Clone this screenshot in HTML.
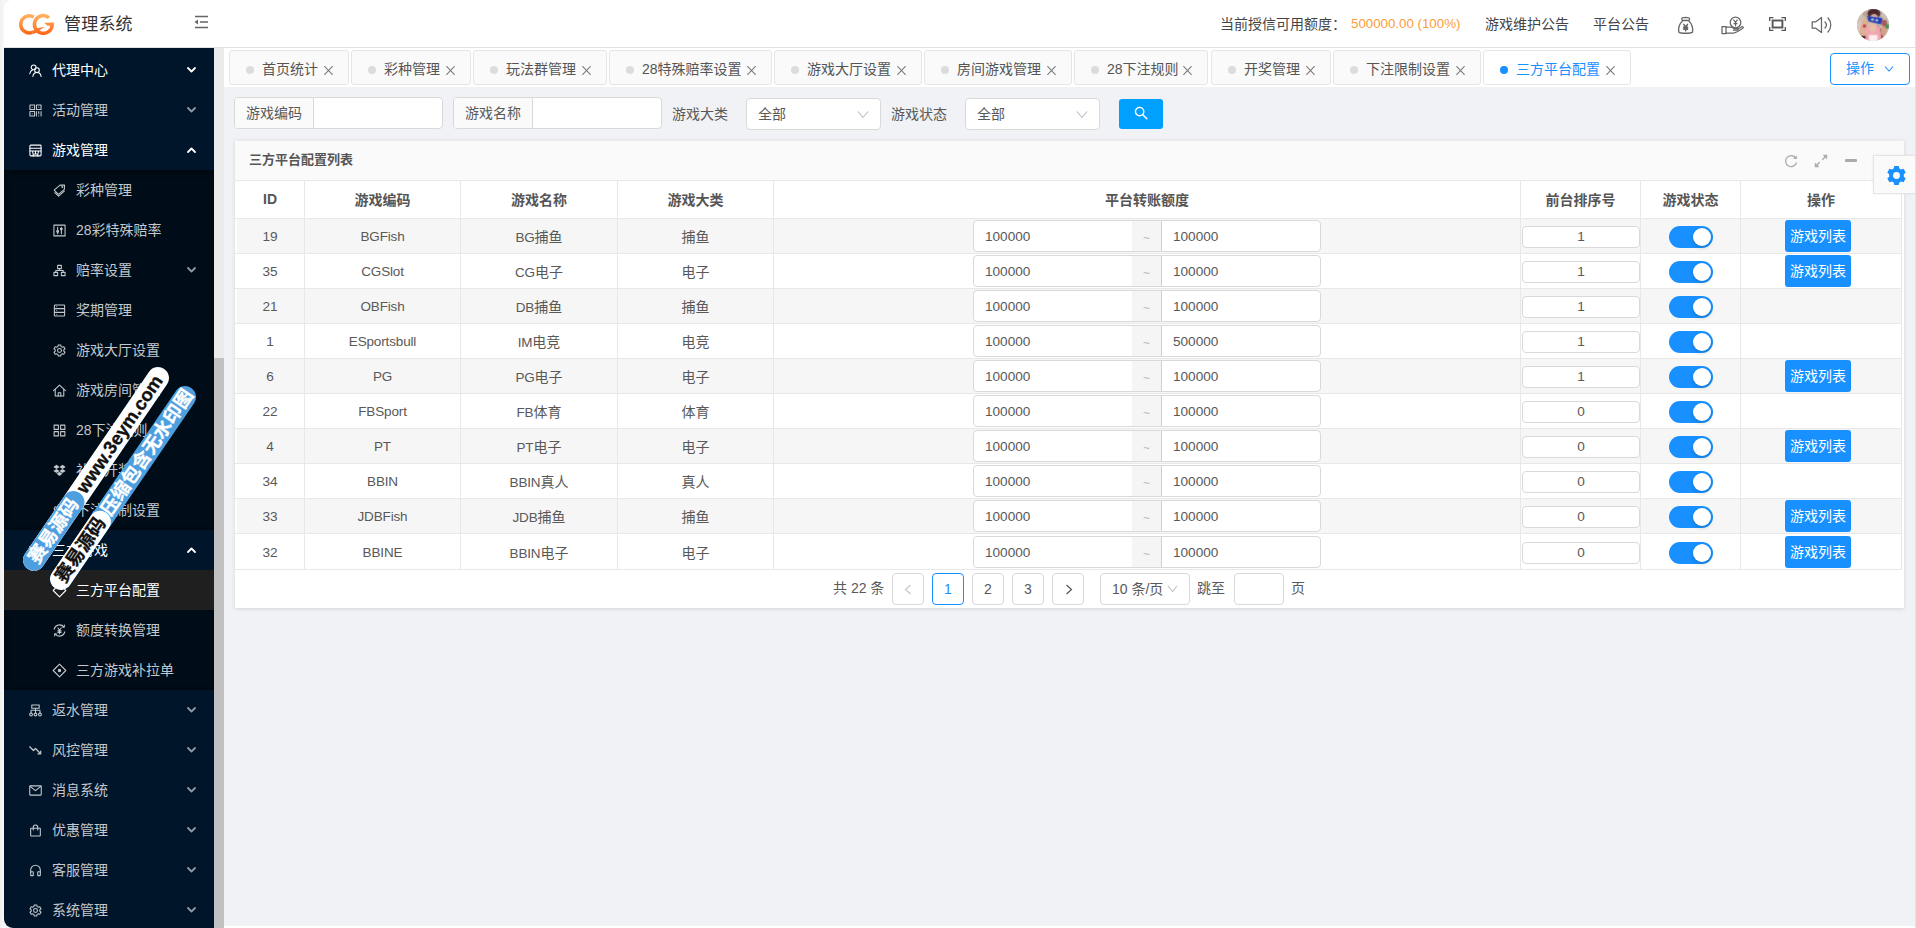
<!DOCTYPE html><html lang="zh-CN"><head><meta charset="utf-8"><title>管理系统</title><style>
*{box-sizing:border-box;margin:0;padding:0}
html,body{width:1916px;height:928px;overflow:hidden}
body{position:relative;background:#f4f4f4;font-family:"Liberation Sans","Noto Sans CJK SC",sans-serif;font-size:14px;color:#595959;}
.abs{position:absolute}
#edgeL{left:0;top:0;width:4px;height:928px;background:linear-gradient(90deg,#f0f0f0,#f8f8f8)}
#hdr{left:4px;top:0;width:1912px;height:48px;background:#fff;border-bottom:1px solid #e2e2e2;border-top-left-radius:8px}
#title{left:64px;top:10.500px;font-size:17px;line-height:28px;color:#333;letter-spacing:.2px;white-space:nowrap}
.hd{top:14px;line-height:20px;font-size:14px;color:#444;white-space:nowrap}
#side{left:4px;top:48px;width:210px;height:880px;background:#001529;border-bottom-left-radius:9px;overflow:hidden}
.sub{position:absolute;left:0;width:210px;background:#000c17;box-shadow:inset 0 2px 6px rgba(0,0,0,.45)}
.mi{position:absolute;left:0;width:210px;height:40px;line-height:40px;color:#c3c8ce;font-size:14px;white-space:nowrap}
.mi .t{position:absolute;left:48px;top:0}
.mi.s .t{left:72px}
.mi svg.ic{position:absolute;left:24.500px;top:13.500px;width:13px;height:13px;overflow:visible}
.mi.s svg.ic{left:48.500px}
.mi svg.ar{position:absolute;left:182.500px;top:16px;width:9px;height:8px;overflow:visible}
.mi.w{color:#fff;font-weight:400}
#sbar{left:214px;top:48px;width:10px;height:880px;background:#ebebeb}
#sthumb{left:214px;top:358px;width:10px;height:570px;background:#c1c1c1}
#main{left:224px;top:48px;width:1692px;height:880px;background:#f0f2f5}
#tabs{left:224px;top:48px;width:1691px;height:39px;background:#fff}
.tab{position:absolute;top:50px;height:35px;border:1px solid #e6e6e6;border-radius:3px;background:#fafafa;font-size:14px;line-height:35px;color:#555;white-space:nowrap}
.tab i{position:absolute;left:16px;top:15px;width:8px;height:8px;border-radius:50%;background:#dcdcdc}
.tab b{position:absolute;left:32px;top:0;font-weight:normal;line-height:37px}
.tab svg{position:absolute;right:15px;top:15px;width:9px;height:9px}
.tab.on{background:#fff;color:#1890ff}
.tab.on i{background:#1890ff}
.grp{position:absolute;top:97px;height:32px;border:1px solid #d9d9d9;border-radius:4px;background:#fff;overflow:hidden}
.grp span{position:absolute;left:0;top:0;width:79px;height:30px;line-height:30px;background:#fafafa;border-right:1px solid #d9d9d9;text-align:center;font-size:14px;color:#595959}
.lbl{position:absolute;top:98px;line-height:32px;font-size:14px;color:#595959;white-space:nowrap}
.sel{position:absolute;top:98px;height:32px;border:1px solid #d9d9d9;border-radius:4px;background:#fff;line-height:30px;font-size:14px;color:#595959;padding-left:11px}
.sel svg{position:absolute;right:11px;top:11px;width:12px;height:9px}
#sbtn{left:1119px;top:99px;width:44px;height:30px;background:#00a0ff;border-radius:3px}
#card{left:235px;top:140px;width:1669px;height:468px;background:#fff;box-shadow:0 1px 4px rgba(0,0,0,.12)}
#chead{left:235px;top:140px;width:1669px;height:41px;background:#fafafa;border-bottom:1px solid #e8e8e8;border-top:1px solid #ececec}
#ctitle{left:249px;top:150px;line-height:20px;font-size:13px;font-weight:bold;color:#555;white-space:nowrap}
table{position:absolute;left:235px;top:180px;border-collapse:collapse;table-layout:fixed;width:1666px;font-size:14px;color:#595959}
th,td{border:1px solid #e8e8e8;text-align:center;padding:0;white-space:nowrap;position:relative}
th{height:38px;padding-bottom:2px;font-weight:bold;color:#555;font-size:14px;background:#fff}
td{height:35px}
tr.o td{background:#f6f6f6}
td:first-child,th:first-child{border-left-color:#fff;box-shadow:inset 1px 0 #fff}
tr.z td{height:36px}
tr.z .ig{top:2px}
tr.z .si,tr.z .sw{top:8px}
tr.z .gb{top:2px}
.ig{position:absolute;left:199px;top:1px;width:348px;height:32px;border:1px solid #d9d9d9;border-radius:4px;background:#fff;overflow:hidden;text-align:left}
.ig u{position:absolute;top:0;line-height:32px;text-decoration:none;font-size:13.600px;color:#595959}
.ig em{position:absolute;left:158px;top:0;width:30px;height:30px;background:#f5f5f5;border-right:1px solid #d0d0d0;text-align:center;line-height:35px;font-style:normal;color:#bbb;font-size:12px}
.si{position:absolute;left:1px;top:7px;width:118px;height:22px;border:1px solid #d9d9d9;border-radius:4px;background:#fff;line-height:20px;font-size:13.600px;text-align:center}
.sw{position:absolute;left:28px;top:7px;width:44px;height:22px;border-radius:11px;background:#1890ff}
.sw:after{content:"";position:absolute;right:2px;top:2px;width:18px;height:18px;border-radius:50%;background:#fff;box-shadow:0 2px 4px rgba(0,35,11,.2)}
.gb{position:absolute;left:44px;top:1px;width:66px;height:32px;border-radius:3px;background:#1890ff;color:#fff;font-size:14px;line-height:32px;text-align:center}
.pg{position:absolute;top:573px;height:32px;line-height:30px;font-size:14px;color:#595959;white-space:nowrap}
.pb{border:1px solid #d9d9d9;border-radius:4px;background:#fff;width:32px;text-align:center}
#gear{left:1873px;top:155px;width:43px;height:39px;background:#fafafa;border:1px solid #e4e4e4;border-right:0;box-shadow:0 0 3px rgba(0,0,0,.06)}
.wm{position:absolute;width:242px;height:22px;border-radius:11px;white-space:nowrap;font-weight:bold;font-size:18.500px;line-height:22px;overflow:hidden;transform:rotate(-55.700deg)}
.wm span{position:absolute;top:0;height:22px;border-radius:11px;-webkit-text-stroke:.3px currentColor}
.l{font-size:13.500px;letter-spacing:-.15px}
.n{font-size:13.600px}
.bot{left:224px;top:926px;width:1692px;height:2px;background:#fff}
#edgeR{left:1914.500px;top:0;width:1.500px;height:928px;background:#e2e2e2}
</style></head><body>
<div class="abs" id="edgeL"></div>
<div class="abs" id="hdr"></div>
<svg class="abs" style="left:0;top:0;width:60px;height:48px" viewBox="0 0 60 48"><defs><linearGradient id="lg" gradientUnits="userSpaceOnUse" x1="0" y1="13" x2="0" y2="35.500"><stop offset="0" stop-color="#ffb866"/><stop offset=".55" stop-color="#ff8a3a"/><stop offset="1" stop-color="#ff6216"/></linearGradient></defs><g fill="none" stroke="url(#lg)" stroke-width="3.500"><path d="M33.700 17A8.550 8.550 0 1 0 32.300 32.400"/><path d="M49 17.600A8.900 8.900 0 1 0 52.200 24.400"/></g><g fill="url(#lg)"><path d="M31.700 30.800C35 30.500 38 27 44.800 27C41 28.500 38 33 32.900 34.100Z"/><path d="M53.950 22.500L44.300 22.800L47.500 25.700L53.800 25.700Z"/></g></svg>
<div class="abs" id="title">管理系统</div>
<svg class="abs" style="left:194px;top:15px;width:15px;height:14px" viewBox="0 0 15 14"><g fill="none" stroke="#666" stroke-width="1.300"><path d="M1 1.500h13M6 7h8M1 12.500h13"/></g><path d="M.5 7l3.500 -2.500v5z" fill="#666"/></svg>
<div class="abs hd" style="left:1220px">当前授信可用额度：</div>
<div class="abs hd" style="left:1351px;color:#fa9d3b;font-size:13.300px">500000.00 (100%)</div>
<div class="abs hd" style="left:1485px">游戏维护公告</div>
<div class="abs hd" style="left:1593px">平台公告</div>
<svg class="abs" style="left:1675.500px;top:14.500px;width:19.300px;height:21.700px" viewBox="0 0 18 18" preserveAspectRatio="none"><g fill="none" stroke="#666" stroke-width="1.250" stroke-linecap="round" stroke-linejoin="round"><path d="M5.500 2.800c0 -1 7 -1 7 0v1.200c0 .8 -7 .8 -7 0z"/><path d="M6.200 4.800c-2.500 2.200 -4.200 6 -3.600 9.200c.3 1.600 12.500 1.600 12.800 0c.6 -3.200 -1.100 -7 -3.600 -9.200"/><path d="M7.300 7.800l1.700 2.200l1.700 -2.200M9 10v3M7.200 10.200h3.600M7.200 11.700h3.600" stroke-width="1.400"/></g></svg>
<svg class="abs" style="left:1721px;top:15.500px;width:24px;height:20px" viewBox="0 0 24 20"><g fill="none" stroke="#666" stroke-width="1.250" stroke-linecap="round" stroke-linejoin="round"><circle cx="14.500" cy="6.500" r="5.300"/><path d="M12.800 4l1.700 2.400l1.700 -2.400M14.500 6.400v3.400M13 7.600h3"/><rect x="1" y="10.500" width="4" height="7"/><path d="M5 11h4.500c1.500 0 2.500 .8 3.500 1.500h3.500c1 0 1 1.700 0 1.700h-4"/><path d="M5 17h7.500c2 0 7 -3.200 9.500 -5c.8 -.7 -.2 -1.800 -1.200 -1.300l-3.600 2"/></g></svg>
<svg class="abs" style="left:1769px;top:17px;width:17px;height:14px" viewBox="0 0 17 14"><g fill="none" stroke="#555" stroke-width="1.300"><path d="M.7 4v-3.300h3.800M12.500 .7h3.800v3.300M16.300 10v3.300h-3.800M4.500 13.300h-3.800v-3.300"/><rect x="3.600" y="3.500" width="9.800" height="7" stroke-width="1.900"/></g></svg>
<svg class="abs" style="left:1811px;top:16px;width:22px;height:18px" viewBox="0 0 22 18"><g fill="none" stroke="#666" stroke-width="1.250" stroke-linecap="round" stroke-linejoin="round" stroke-width="1.350"><path d="M1.200 5.800h3.600l5.700 -4.300v15l-5.700 -4.300h-3.600z"/><path d="M14 6c1.600 1.700 1.600 4.300 0 6"/><path d="M17 2c3.700 4 3.700 10 0 14"/></g></svg>
<svg class="abs" style="left:1857px;top:8.800px;width:32px;height:32px" viewBox="0 0 32 32"><defs><clipPath id="avc"><circle cx="16" cy="16" r="16"/></clipPath><filter id="avb" x="-20%" y="-20%" width="140%" height="140%" color-interpolation-filters="sRGB"><feGaussianBlur stdDeviation="0.82"/></filter></defs><g clip-path="url(#avc)"><rect width="32" height="32" fill="#cbbdb2"/><g id="avg" filter="url(#avb)"><rect x="-4" y="-4" width="40" height="40" fill="#cdc0b5"/><path d="M-2 13h9v12h-9z" fill="#dcc6c0"/><path d="M6 2l5 1l-1 5l-4 -1z" fill="#b9a58f"/><ellipse cx="5.500" cy="28.500" rx="5.500" ry="3.500" fill="#35141d"/><path d="M2 24C4 16 6 10 9 7L12.500 11C10.500 16 9.500 22 8.500 27L2 27Z" fill="#dcb193"/><ellipse cx="17" cy="4.500" rx="6.500" ry="5" fill="#46252a"/><ellipse cx="17" cy="12" rx="5.200" ry="7" fill="#e6bfa3"/><ellipse cx="16.500" cy="16.800" rx="1.800" ry=".7" fill="#c9606a"/><path d="M20 16C24.500 18 27 26 26 32L21 32C22 26 21 22 20 16Z" fill="#8a4040"/><path d="M24.500 11L29.500 12.500C31 19 29 26 27 29L23.500 24C25 20 25 16 24.500 11Z" fill="#d3a083"/><ellipse cx="27.300" cy="14" rx="2.800" ry="3.300" fill="#a85a58"/><path d="M9 18L13 16.500L16 23L20 16.500L23 18.500L25 34L8 34Z" fill="#f0a5b0"/><ellipse cx="16" cy="19.500" rx="2.800" ry="4" fill="#e8c0a8"/><path d="M12 26h8.500v7h-8.500z" fill="#fdf0f0"/><circle cx="7.500" cy="17" r="1.700" fill="#c92f3c"/><circle cx="30.500" cy="17.500" r="2.200" fill="#3c8f4e"/><path d="M10 7L25.500 9L24 15.500L11.500 12.500Z" fill="#1b3ab8"/><ellipse cx="15.500" cy="10.600" rx="1.600" ry="1.100" fill="#e3e6cf"/><ellipse cx="19.800" cy="11.400" rx="1.400" ry="1.100" fill="#e3e6cf"/></g><g opacity=".5"><rect x="-4" y="-4" width="40" height="40" fill="#cdc0b5"/><path d="M-2 13h9v12h-9z" fill="#dcc6c0"/><path d="M6 2l5 1l-1 5l-4 -1z" fill="#b9a58f"/><ellipse cx="5.500" cy="28.500" rx="5.500" ry="3.500" fill="#35141d"/><path d="M2 24C4 16 6 10 9 7L12.500 11C10.500 16 9.500 22 8.500 27L2 27Z" fill="#dcb193"/><ellipse cx="17" cy="4.500" rx="6.500" ry="5" fill="#46252a"/><ellipse cx="17" cy="12" rx="5.200" ry="7" fill="#e6bfa3"/><ellipse cx="16.500" cy="16.800" rx="1.800" ry=".7" fill="#c9606a"/><path d="M20 16C24.500 18 27 26 26 32L21 32C22 26 21 22 20 16Z" fill="#8a4040"/><path d="M24.500 11L29.500 12.500C31 19 29 26 27 29L23.500 24C25 20 25 16 24.500 11Z" fill="#d3a083"/><ellipse cx="27.300" cy="14" rx="2.800" ry="3.300" fill="#a85a58"/><path d="M9 18L13 16.500L16 23L20 16.500L23 18.500L25 34L8 34Z" fill="#f0a5b0"/><ellipse cx="16" cy="19.500" rx="2.800" ry="4" fill="#e8c0a8"/><path d="M12 26h8.500v7h-8.500z" fill="#fdf0f0"/><circle cx="7.500" cy="17" r="1.700" fill="#c92f3c"/><circle cx="30.500" cy="17.500" r="2.200" fill="#3c8f4e"/><path d="M10 7L25.500 9L24 15.500L11.500 12.500Z" fill="#1b3ab8"/><ellipse cx="15.500" cy="10.600" rx="1.600" ry="1.100" fill="#e3e6cf"/><ellipse cx="19.800" cy="11.400" rx="1.400" ry="1.100" fill="#e3e6cf"/></g></g></svg>
<div class="abs" id="side">
<div class="sub" style="top:122px;height:360px"></div>
<div class="sub" style="top:522px;height:120px"></div>
<div style="position:absolute;left:0;top:522px;width:210px;height:40px;background:#1f1f1f"></div>
<div class="mi w" style="top:2px"><svg class="ic" viewBox="0 0 14 14"><g fill="none" stroke="currentColor" stroke-width="1.15" stroke-linecap="round" stroke-linejoin="round"><circle cx="5" cy="3.6" r="2.6"/><path d="M.8 10.5c.4-2.3 1.7-3.6 3-4.1"/><circle cx="8.6" cy="6.6" r="2.5"/><path d="M4.2 13.4c.3-2.6 1.9-4.3 4.4-4.3s4.100 1.700 4.400 4.300"/></g></svg><span class="t">代理中心</span><svg class="ar" viewBox="0 0 9 8"><path d="M1 2l3.500 3.500l3.500 -3.500" fill="none" stroke="#fff" stroke-width="1.800" stroke-linecap="round" stroke-linejoin="round"/></svg></div>
<div class="mi" style="top:42px"><svg class="ic" viewBox="0 0 14 14"><g fill="none" stroke="currentColor" stroke-width="1.15" stroke-linecap="round" stroke-linejoin="round"><rect x="1" y="1" width="5" height="5"/><rect x="8" y="1" width="5" height="5"/><rect x="1" y="8" width="5" height="5"/><path d="M3.500 3.500h0M10.500 3.500h0M3.500 10.500h0M8 8v5M10.500 8v2.500M13 8v5M10.500 12.800h0"/></g></svg><span class="t">活动管理</span><svg class="ar" viewBox="0 0 9 8"><path d="M1 2l3.500 3.500l3.500 -3.500" fill="none" stroke="#8f98a3" stroke-width="1.800" stroke-linecap="round" stroke-linejoin="round"/></svg></div>
<div class="mi w" style="top:82px"><svg class="ic" viewBox="0 0 14 14"><g fill="none" stroke="currentColor" stroke-width="1.15" stroke-linecap="round" stroke-linejoin="round"><rect x="1" y="1.200" width="12" height="11.600" rx="1"/><path d="M1 4.500h12M1 7.500h12M4 7.500v2.200M7 7.500v2.200M10 7.500v2.200M4.500 12.800v-2h5v2"/></g></svg><span class="t">游戏管理</span><svg class="ar" viewBox="0 0 9 8"><path d="M1 6l3.500 -3.500l3.500 3.500" fill="none" stroke="#fff" stroke-width="1.800" stroke-linecap="round" stroke-linejoin="round"/></svg></div>
<div class="mi s" style="top:122px"><svg class="ic" viewBox="0 0 14 14"><g fill="none" stroke="currentColor" stroke-width="1.15" stroke-linecap="round" stroke-linejoin="round"><path d="M7.600 1.200l4.800 -.2l-.2 4.800l-6.300 5.300l-4.700 -4.500z"/><path d="M2 9.200l4 3.900l6.200 -5.400"/><circle cx="10" cy="3.300" r=".5"/></g></svg><span class="t">彩种管理</span></div>
<div class="mi s" style="top:162px"><svg class="ic" viewBox="0 0 14 14"><g fill="none" stroke="currentColor" stroke-width="1.15" stroke-linecap="round" stroke-linejoin="round"><rect x="1" y="1.200" width="12" height="11.600"/><path d="M5 3.500v7M9 3.500v7"/><circle cx="5" cy="8" r="1"/><circle cx="9" cy="5.500" r="1"/></g></svg><span class="t">28彩特殊赔率</span></div>
<div class="mi s" style="top:202px"><svg class="ic" viewBox="0 0 14 14"><g fill="none" stroke="currentColor" stroke-width="1.15" stroke-linecap="round" stroke-linejoin="round"><rect x="5" y="1.500" width="4" height="3.500"/><rect x="1" y="9" width="4" height="3.500"/><rect x="9" y="9" width="4" height="3.500"/><path d="M7 5v2M3 9V7h8v2"/></g></svg><span class="t">赔率设置</span><svg class="ar" viewBox="0 0 9 8"><path d="M1 2l3.500 3.500l3.500 -3.500" fill="none" stroke="#8f98a3" stroke-width="1.800" stroke-linecap="round" stroke-linejoin="round"/></svg></div>
<div class="mi s" style="top:242px"><svg class="ic" viewBox="0 0 14 14"><g fill="none" stroke="currentColor" stroke-width="1.15" stroke-linecap="round" stroke-linejoin="round"><rect x="1.500" y="1" width="11" height="12" rx=".8"/><path d="M1.500 5h11M1.500 9h11M4 3h0M4 7h0M4 11h0"/></g></svg><span class="t">奖期管理</span></div>
<div class="mi s" style="top:282px"><svg class="ic" viewBox="0 0 14 14"><g fill="none" stroke="currentColor" stroke-width="1.15" stroke-linecap="round" stroke-linejoin="round"><path d="M5.700 1h2.600l.4 1.700l1.200 .7l1.700 -.5l1.300 2.200l-1.300 1.200v1.400l1.300 1.200l-1.300 2.200l-1.700 -.5l-1.200 .7l-.4 1.700h-2.600l-.4 -1.700l-1.200 -.7l-1.700 .5l-1.300 -2.200l1.300 -1.200v-1.400l-1.300 -1.200l1.300 -2.200l1.700 .5l1.200 -.7z"/><circle cx="7" cy="7" r="2.100"/></g></svg><span class="t">游戏大厅设置</span></div>
<div class="mi s" style="top:322px"><svg class="ic" viewBox="0 0 14 14"><g fill="none" stroke="currentColor" stroke-width="1.15" stroke-linecap="round" stroke-linejoin="round"><path d="M.6 7.200l6.400 -6l6.400 6"/><path d="M2.400 6v7h9.200v-7"/><path d="M5.600 13v-3.600h2.800v3.600"/></g></svg><span class="t">游戏房间管理</span></div>
<div class="mi s" style="top:362px"><svg class="ic" viewBox="0 0 14 14"><g fill="none" stroke="currentColor" stroke-width="1.15" stroke-linecap="round" stroke-linejoin="round"><rect x="1.200" y="1.200" width="4.600" height="4.600"/><rect x="8.200" y="1.200" width="4.600" height="4.600"/><rect x="1.200" y="8.200" width="4.600" height="4.600"/><rect x="8.200" y="8.200" width="4.600" height="4.600"/></g></svg><span class="t">28下注规则</span></div>
<div class="mi s" style="top:402px"><svg class="ic" viewBox="0 0 14 14"><g fill="currentColor"><path d="M3.800 .8l-3.400 2.300l3.400 2.200l3.200 -2.200zM10.200 .8l3.400 2.300l-3.400 2.200l-3.200 -2.200zM.4 7.500l3.400 -2.200l3.200 2.200l-3.200 2.300zM13.600 7.500l-3.400 -2.200l-3.200 2.200l3.200 2.300zM3.800 10.600l3.200 -2.200l3.200 2.200l-3.200 2.200z"/></g></svg><span class="t">补单开奖</span></div>
<div class="mi s" style="top:442px"><svg class="ic" viewBox="0 0 14 14"><g fill="none" stroke="currentColor" stroke-width="1.15" stroke-linecap="round" stroke-linejoin="round"><path d="M5.700 1h2.600l.4 1.700l1.200 .7l1.700 -.5l1.300 2.200l-1.300 1.200v1.400l1.300 1.200l-1.300 2.200l-1.700 -.5l-1.200 .7l-.4 1.700h-2.600l-.4 -1.700l-1.200 -.7l-1.700 .5l-1.300 -2.200l1.300 -1.200v-1.400l-1.300 -1.200l1.300 -2.200l1.700 .5l1.200 -.7z"/><circle cx="7" cy="7" r="2.100"/></g></svg><span class="t">下注限制设置</span></div>
<div class="mi w" style="top:482px"><svg class="ic" viewBox="0 0 14 14"><g stroke="currentColor" fill="none" stroke-width="1.300" stroke-linecap="round" stroke-linejoin="round"><path d="M.8 3l4 4l2.200 -2.200l5.200 5.400"/><path d="M9.600 10.600h3v-3"/></g></svg><span class="t">三方游戏</span><svg class="ar" viewBox="0 0 9 8"><path d="M1 6l3.500 -3.500l3.500 3.500" fill="none" stroke="#fff" stroke-width="1.800" stroke-linecap="round" stroke-linejoin="round"/></svg></div>
<div class="mi s w" style="top:522px"><svg class="ic" viewBox="0 0 14 14"><g fill="none" stroke="currentColor" stroke-width="1.15" stroke-linecap="round" stroke-linejoin="round"><path d="M7 .2l6.800 6.800l-6.800 6.800l-6.800 -6.800z"/></g></svg><span class="t">三方平台配置</span></div>
<div class="mi s" style="top:562px"><svg class="ic" viewBox="0 0 14 14"><g fill="none" stroke="currentColor" stroke-width="1.15" stroke-linecap="round" stroke-linejoin="round"><path d="M1.300 5.500a6 6 0 0 1 10.500 -2.300M12.700 8.500a6 6 0 0 1 -10.500 2.300"/><path d="M12.300 1.200l-.3 2.200l-2.200 -.2M1.700 12.800l.3 -2.200l2.200 .2"/><path d="M5.300 4.300l1.700 2.500l1.700 -2.500M7 6.800v3.600M5.200 7.400h3.600M5.200 9h3.600"/></g></svg><span class="t">额度转换管理</span></div>
<div class="mi s" style="top:602px"><svg class="ic" viewBox="0 0 14 14"><g fill="none" stroke="currentColor" stroke-width="1.15" stroke-linecap="round" stroke-linejoin="round"><path d="M7 .2l6.800 6.800l-6.800 6.800l-6.800 -6.800z"/><circle cx="7" cy="7" r="1.300" fill="currentColor"/></g></svg><span class="t">三方游戏补拉单</span></div>
<div class="mi" style="top:642px"><svg class="ic" viewBox="0 0 14 14"><g fill="none" stroke="currentColor" stroke-width="1.15" stroke-linecap="round" stroke-linejoin="round"><rect x="3" y="1" width="8" height="3.600"/><path d="M7 4.600v2.200M2.200 9.500V6.800h9.600v2.700M7 6.800v2.700"/><circle cx="2.200" cy="11.300" r="1.500"/><circle cx="7" cy="11.300" r="1.500"/><circle cx="11.800" cy="11.300" r="1.500"/></g></svg><span class="t">返水管理</span><svg class="ar" viewBox="0 0 9 8"><path d="M1 2l3.500 3.500l3.500 -3.500" fill="none" stroke="#8f98a3" stroke-width="1.800" stroke-linecap="round" stroke-linejoin="round"/></svg></div>
<div class="mi" style="top:682px"><svg class="ic" viewBox="0 0 14 14"><g stroke="currentColor" fill="none" stroke-width="1.300" stroke-linecap="round" stroke-linejoin="round"><path d="M.8 3l4 4l2.200 -2.200l5.200 5.400"/><path d="M9.600 10.600h3v-3"/></g></svg><span class="t">风控管理</span><svg class="ar" viewBox="0 0 9 8"><path d="M1 2l3.500 3.500l3.500 -3.500" fill="none" stroke="#8f98a3" stroke-width="1.800" stroke-linecap="round" stroke-linejoin="round"/></svg></div>
<div class="mi" style="top:722px"><svg class="ic" viewBox="0 0 14 14"><g fill="none" stroke="currentColor" stroke-width="1.15" stroke-linecap="round" stroke-linejoin="round"><rect x=".8" y="2" width="12.400" height="10" rx=".6"/><path d="M1.200 2.600l5.800 4.600l5.800 -4.600"/></g></svg><span class="t">消息系统</span><svg class="ar" viewBox="0 0 9 8"><path d="M1 2l3.500 3.500l3.500 -3.500" fill="none" stroke="#8f98a3" stroke-width="1.800" stroke-linecap="round" stroke-linejoin="round"/></svg></div>
<div class="mi" style="top:762px"><svg class="ic" viewBox="0 0 14 14"><g fill="none" stroke="currentColor" stroke-width="1.15" stroke-linecap="round" stroke-linejoin="round"><rect x="1.800" y="4.500" width="10.400" height="8.500" rx=".6"/><path d="M4.600 6.500v-3a2.400 2.400 0 0 1 4.800 0v3"/></g></svg><span class="t">优惠管理</span><svg class="ar" viewBox="0 0 9 8"><path d="M1 2l3.500 3.500l3.500 -3.500" fill="none" stroke="#8f98a3" stroke-width="1.800" stroke-linecap="round" stroke-linejoin="round"/></svg></div>
<div class="mi" style="top:802px"><svg class="ic" viewBox="0 0 14 14"><g fill="none" stroke="currentColor" stroke-width="1.15" stroke-linecap="round" stroke-linejoin="round"><path d="M1.800 9v-2.500a5.200 5.200 0 0 1 10.400 0v2.500"/><rect x="1.800" y="8.300" width="2.800" height="4.200" rx=".5"/><rect x="9.400" y="8.300" width="2.800" height="4.200" rx=".5"/></g></svg><span class="t">客服管理</span><svg class="ar" viewBox="0 0 9 8"><path d="M1 2l3.500 3.500l3.500 -3.500" fill="none" stroke="#8f98a3" stroke-width="1.800" stroke-linecap="round" stroke-linejoin="round"/></svg></div>
<div class="mi" style="top:842px"><svg class="ic" viewBox="0 0 14 14"><g fill="none" stroke="currentColor" stroke-width="1.15" stroke-linecap="round" stroke-linejoin="round"><path d="M5.700 1h2.600l.4 1.700l1.200 .7l1.700 -.5l1.300 2.200l-1.300 1.200v1.400l1.300 1.200l-1.300 2.200l-1.700 -.5l-1.200 .7l-.4 1.700h-2.600l-.4 -1.700l-1.200 -.7l-1.700 .5l-1.300 -2.200l1.300 -1.200v-1.400l-1.300 -1.200l1.300 -2.200l1.700 .5l1.200 -.7z"/><circle cx="7" cy="7" r="2.100"/></g></svg><span class="t">系统管理</span><svg class="ar" viewBox="0 0 9 8"><path d="M1 2l3.500 3.500l3.500 -3.500" fill="none" stroke="#8f98a3" stroke-width="1.800" stroke-linecap="round" stroke-linejoin="round"/></svg></div>
</div>
<div class="abs" id="sbar"></div><div class="abs" id="sthumb"></div>
<div class="abs" id="main"></div><div class="abs" id="tabs"></div>
<div class="tab" style="left:229px;width:120px"><i></i><b>首页统计</b><svg viewBox="0 0 9 9"><path d="M.4 .2l8.200 8.600M8.600 .2l-8.200 8.600" stroke="#777" stroke-width="1.100" fill="none"/></svg></div>
<div class="tab" style="left:351px;width:120px"><i></i><b>彩种管理</b><svg viewBox="0 0 9 9"><path d="M.4 .2l8.200 8.600M8.600 .2l-8.200 8.600" stroke="#777" stroke-width="1.100" fill="none"/></svg></div>
<div class="tab" style="left:473px;width:134px"><i></i><b>玩法群管理</b><svg viewBox="0 0 9 9"><path d="M.4 .2l8.200 8.600M8.600 .2l-8.200 8.600" stroke="#777" stroke-width="1.100" fill="none"/></svg></div>
<div class="tab" style="left:609px;width:163px"><i></i><b>28特殊赔率设置</b><svg viewBox="0 0 9 9"><path d="M.4 .2l8.200 8.600M8.600 .2l-8.200 8.600" stroke="#777" stroke-width="1.100" fill="none"/></svg></div>
<div class="tab" style="left:774px;width:148px"><i></i><b>游戏大厅设置</b><svg viewBox="0 0 9 9"><path d="M.4 .2l8.200 8.600M8.600 .2l-8.200 8.600" stroke="#777" stroke-width="1.100" fill="none"/></svg></div>
<div class="tab" style="left:924px;width:148px"><i></i><b>房间游戏管理</b><svg viewBox="0 0 9 9"><path d="M.4 .2l8.200 8.600M8.600 .2l-8.200 8.600" stroke="#777" stroke-width="1.100" fill="none"/></svg></div>
<div class="tab" style="left:1074px;width:134px"><i></i><b>28下注规则</b><svg viewBox="0 0 9 9"><path d="M.4 .2l8.200 8.600M8.600 .2l-8.200 8.600" stroke="#777" stroke-width="1.100" fill="none"/></svg></div>
<div class="tab" style="left:1211px;width:120px"><i></i><b>开奖管理</b><svg viewBox="0 0 9 9"><path d="M.4 .2l8.200 8.600M8.600 .2l-8.200 8.600" stroke="#777" stroke-width="1.100" fill="none"/></svg></div>
<div class="tab" style="left:1333px;width:148px"><i></i><b>下注限制设置</b><svg viewBox="0 0 9 9"><path d="M.4 .2l8.200 8.600M8.600 .2l-8.200 8.600" stroke="#777" stroke-width="1.100" fill="none"/></svg></div>
<div class="tab on" style="left:1483px;width:148px"><i></i><b>三方平台配置</b><svg viewBox="0 0 9 9"><path d="M.4 .2l8.200 8.600M8.600 .2l-8.200 8.600" stroke="#777" stroke-width="1.100" fill="none"/></svg></div>
<div class="abs" style="left:1830px;top:53px;width:80px;height:32px;border:1px solid #1890ff;border-radius:4px;background:#fff;color:#1890ff;font-size:14px;line-height:29px;padding-left:15px">操作<svg style="position:absolute;left:53px;top:11px;width:10px;height:8px" viewBox="0 0 10 8"><path d="M1 1.500l4 4.500l4 -4.500" fill="none" stroke="#1890ff" stroke-width="1.100"/></svg></div>
<div class="grp" style="left:234px;width:209px"><span>游戏编码</span></div>
<div class="grp" style="left:453px;width:209px"><span>游戏名称</span></div>
<div class="lbl" style="left:672px">游戏大类</div>
<div class="sel" style="left:746px;width:135px">全部<svg viewBox="0 0 12 9"><path d="M1 1.500l5 6l5 -6" fill="none" stroke="#bfbfbf" stroke-width="1.100"/></svg></div>
<div class="lbl" style="left:891px">游戏状态</div>
<div class="sel" style="left:965px;width:135px">全部<svg viewBox="0 0 12 9"><path d="M1 1.500l5 6l5 -6" fill="none" stroke="#bfbfbf" stroke-width="1.100"/></svg></div>
<div class="abs" id="sbtn"><svg style="position:absolute;left:15px;top:7px;width:14px;height:14px" viewBox="0 0 14 14"><circle cx="5.600" cy="5.600" r="4.200" fill="none" stroke="#fff" stroke-width="1.400"/><path d="M8.800 8.800l4 4" stroke="#fff" stroke-width="1.500" stroke-linecap="round"/></svg></div>
<div class="abs" id="card"></div><div class="abs" id="chead"></div><div class="abs" id="ctitle">三方平台配置列表</div>
<svg class="abs" style="left:1784px;top:153.700px;width:14px;height:14px" viewBox="0 0 14 14"><path d="M11.800 4.200a5.500 5.500 0 1 0 .7 4.300" fill="none" stroke="#aaa" stroke-width="1.300"/><path d="M12.800 1.200v3.800h-3.800z" fill="#aaa"/></svg>
<svg class="abs" style="left:1814px;top:153.700px;width:14px;height:14px" viewBox="0 0 14 14"><path d="M8.300 5.700l3.500 -3.500M5.700 8.300l-3.500 3.500" fill="none" stroke="#aaa" stroke-width="1.400"/><path d="M8.600 .8h4.600v4.600zM.8 8.600v4.600h4.600z" fill="#aaa"/></svg>
<div class="abs" style="left:1845px;top:158.500px;width:12px;height:3px;background:#aaa;border-radius:1px"></div>
<table><colgroup><col style="width:69px"><col style="width:156px"><col style="width:157px"><col style="width:156px"><col style="width:747px"><col style="width:120px"><col style="width:100px"><col style="width:161px"></colgroup>
<tr><th>ID</th><th>游戏编码</th><th>游戏名称</th><th>游戏大类</th><th>平台转账额度</th><th>前台排序号</th><th>游戏状态</th><th>操作</th></tr>
<tr class="o"><td><span class="n">19</span></td><td><span class="l">BGFish</span></td><td><span class="l">BG</span>捕鱼</td><td>捕鱼</td><td><div class="ig"><u style="left:11px">100000</u><em>~</em><u style="left:199px">100000</u></div></td><td><div class="si">1</div></td><td><div class="sw"></div></td><td><div class="gb">游戏列表</div></td></tr>
<tr><td><span class="n">35</span></td><td><span class="l">CGSlot</span></td><td><span class="l">CG</span>电子</td><td>电子</td><td><div class="ig"><u style="left:11px">100000</u><em>~</em><u style="left:199px">100000</u></div></td><td><div class="si">1</div></td><td><div class="sw"></div></td><td><div class="gb">游戏列表</div></td></tr>
<tr class="o"><td><span class="n">21</span></td><td><span class="l">OBFish</span></td><td><span class="l">DB</span>捕鱼</td><td>捕鱼</td><td><div class="ig"><u style="left:11px">100000</u><em>~</em><u style="left:199px">100000</u></div></td><td><div class="si">1</div></td><td><div class="sw"></div></td><td></td></tr>
<tr><td><span class="n">1</span></td><td><span class="l">ESportsbull</span></td><td><span class="l">IM</span>电竞</td><td>电竞</td><td><div class="ig"><u style="left:11px">100000</u><em>~</em><u style="left:199px">500000</u></div></td><td><div class="si">1</div></td><td><div class="sw"></div></td><td></td></tr>
<tr class="o"><td><span class="n">6</span></td><td><span class="l">PG</span></td><td><span class="l">PG</span>电子</td><td>电子</td><td><div class="ig"><u style="left:11px">100000</u><em>~</em><u style="left:199px">100000</u></div></td><td><div class="si">1</div></td><td><div class="sw"></div></td><td><div class="gb">游戏列表</div></td></tr>
<tr><td><span class="n">22</span></td><td><span class="l">FBSport</span></td><td><span class="l">FB</span>体育</td><td>体育</td><td><div class="ig"><u style="left:11px">100000</u><em>~</em><u style="left:199px">100000</u></div></td><td><div class="si">0</div></td><td><div class="sw"></div></td><td></td></tr>
<tr class="o"><td><span class="n">4</span></td><td><span class="l">PT</span></td><td><span class="l">PT</span>电子</td><td>电子</td><td><div class="ig"><u style="left:11px">100000</u><em>~</em><u style="left:199px">100000</u></div></td><td><div class="si">0</div></td><td><div class="sw"></div></td><td><div class="gb">游戏列表</div></td></tr>
<tr><td><span class="n">34</span></td><td><span class="l">BBIN</span></td><td><span class="l">BBIN</span>真人</td><td>真人</td><td><div class="ig"><u style="left:11px">100000</u><em>~</em><u style="left:199px">100000</u></div></td><td><div class="si">0</div></td><td><div class="sw"></div></td><td></td></tr>
<tr class="o"><td><span class="n">33</span></td><td><span class="l">JDBFish</span></td><td><span class="l">JDB</span>捕鱼</td><td>捕鱼</td><td><div class="ig"><u style="left:11px">100000</u><em>~</em><u style="left:199px">100000</u></div></td><td><div class="si">0</div></td><td><div class="sw"></div></td><td><div class="gb">游戏列表</div></td></tr>
<tr class="z"><td><span class="n">32</span></td><td><span class="l">BBINE</span></td><td><span class="l">BBIN</span>电子</td><td>电子</td><td><div class="ig"><u style="left:11px">100000</u><em>~</em><u style="left:199px">100000</u></div></td><td><div class="si">0</div></td><td><div class="sw"></div></td><td><div class="gb">游戏列表</div></td></tr>
</table>
<div class="pg" style="left:833px">共 22 条</div>
<div class="pg pb" style="left:892px"><svg style="position:absolute;left:11px;top:10px;width:8px;height:11px" viewBox="0 0 8 11"><path d="M6.500 1l-5 4.500l5 4.500" fill="none" stroke="#c8c8c8" stroke-width="1.200"/></svg></div>
<div class="pg pb" style="left:932px;border-color:#1890ff;color:#1890ff">1</div>
<div class="pg pb" style="left:972px">2</div>
<div class="pg pb" style="left:1012px">3</div>
<div class="pg pb" style="left:1052px"><svg style="position:absolute;left:12px;top:10px;width:8px;height:11px" viewBox="0 0 8 11"><path d="M1.500 1l5 4.500l-5 4.500" fill="none" stroke="#555" stroke-width="1.200"/></svg></div>
<div class="pg pb" style="left:1100px;width:90px;text-align:left;padding-left:11px">10 条/页<svg style="position:absolute;left:66px;top:11px;width:11px;height:8px" viewBox="0 0 11 8"><path d="M1 1l4.500 5.500l4.500 -5.500" fill="none" stroke="#bfbfbf" stroke-width="1.100"/></svg></div>
<div class="pg" style="left:1197px">跳至</div>
<div class="pg pb" style="left:1234px;width:50px"></div>
<div class="pg" style="left:1291px">页</div>
<div class="abs" id="gear"><svg style="position:absolute;left:13px;top:9px;width:19px;height:21px" viewBox="0 0 20 22"><path fill="#1890ff" d="M7.700 1h4.600l.7 2.700l1.700 1l2.700 -.8l2.300 4l-2 1.900v2.400l2 1.900l-2.300 4l-2.700 -.8l-1.700 1l-.7 2.700h-4.600l-.7 -2.700l-1.700 -1l-2.700 .8l-2.300 -4l2 -1.900v-2.400l-2 -1.900l2.300 -4l2.700 .8l1.700 -1z"/><circle cx="10" cy="11" r="3.600" fill="#fafafa"/></svg></div>
<div class="wm" style="left:-25.350px;top:457.900px;background:#fff;color:#111"><span style="left:0;width:92px;background:#4d9fe0;color:#fff;padding-left:9px">赛易源码</span><span style="left:94px;font-size:18.500px;-webkit-text-stroke:.35px #111">www.3eym.com</span></div>
<div class="wm" style="left:2.250px;top:476.700px;background:#4d9fe0;color:#fff"><span style="left:90px">压缩包含无水印图</span><span style="left:0;width:91px;background:#fff;color:#111;padding-left:9px">赛易源码</span></div>
<div class="abs bot"></div><div class="abs" id="edgeR"></div>
</body></html>
